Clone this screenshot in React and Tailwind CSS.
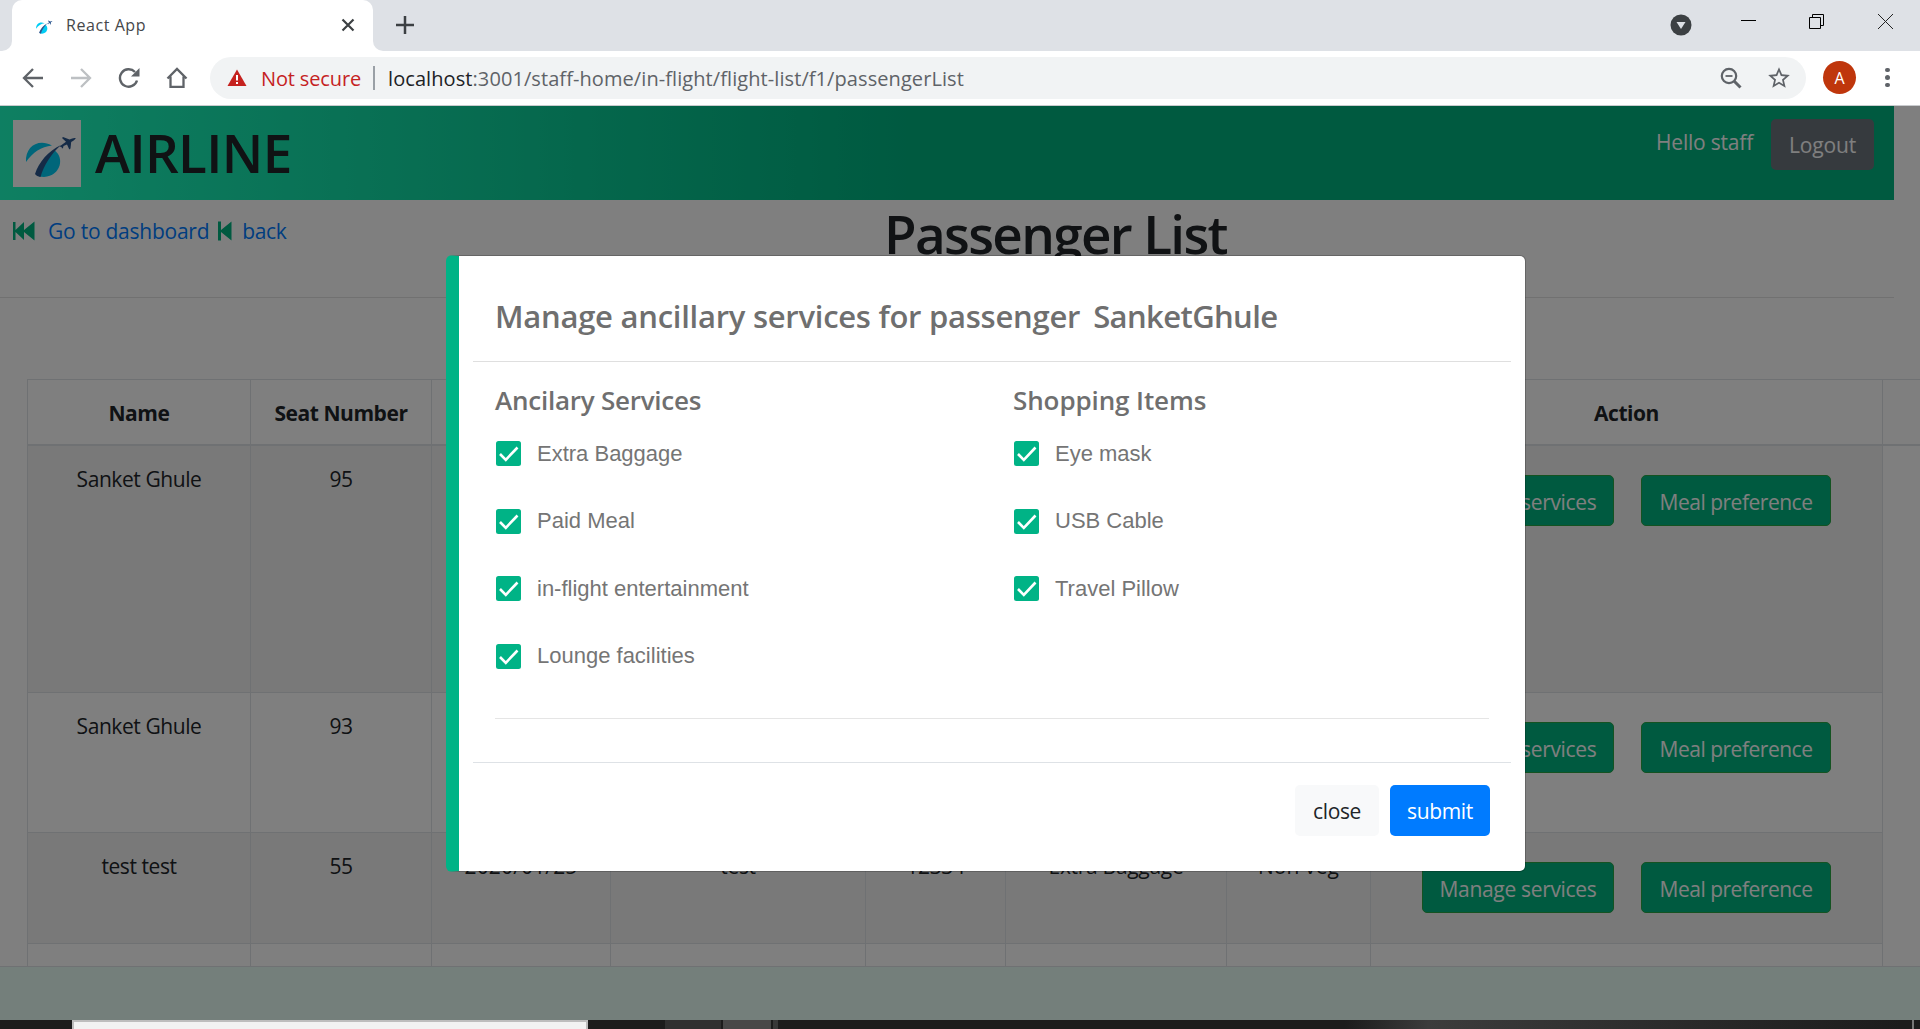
import React from "react";

function Logo({ className }) {
  return (
    <svg viewBox="0 0 68 67" className={className}>
      <path d="M13 42C12 27 25 18 39 25.500C28 27 20 32 13 42Z" fill="#00cdf5" />
      <path d="M41 30C52 37 48 56 31 57L26 56.500C29 46 34 38 41 30Z" fill="#00cdf5" />
      <path d="M22 54C26 42 35 31 48 25C38 34 31 45 27.500 57C25 56.500 23 55.500 22 54Z" fill="#2b568f" />
      <path
        d="M46.500 26.500L53 21.800L49 18L50 17L56.500 19.500C59 18.500 61 17.500 62.800 18.200C61.500 20 60 21 58.200 22L57.500 28.500L56.300 29.500L54 24.500L50.500 26L50 28L49 28.500L48.500 27Z"
        fill="#2b568f"
      />
    </svg>
  );
}

function TabStrip() {
  return (
    <div className="flex h-[51px] bg-[#dee1e6]">
      <div className="flex w-3 items-end bg-white">
        <div className="h-full w-full rounded-br-[10px] bg-[#dee1e6]" />
      </div>
      <div className="bg-[#dee1e6]">
        <div className="flex h-[51px] w-[361px] items-center rounded-t-[10px] bg-white pl-[20px]">
          <Logo className="-ml-px h-[22px] w-[24px]" />
          <span className="mb-[2px] ml-[11px] text-[16px] tracking-[0.56px] text-[#45474a]">React App</span>
          <svg viewBox="0 0 14 14" className="mr-[18px] mb-px ml-auto h-[14px] w-[14px]" stroke="#3c4043" strokeWidth="2.2">
            <path d="M1.500 1.500L12.500 12.500M12.500 1.500L1.500 12.500" />
          </svg>
        </div>
      </div>
      <div className="flex flex-1 bg-white">
        <div className="flex flex-1 items-start rounded-bl-[10px] bg-[#dee1e6]">
          <svg viewBox="0 0 18 18" className="mt-[16px] ml-[23px] h-[18px] w-[18px]" stroke="#3c4043" strokeWidth="2.5">
            <path d="M9 0V18M0 9H18" />
          </svg>
          <svg viewBox="0 0 22 22" className="mt-[14px] ml-auto h-[22px] w-[22px]">
            <circle cx="11" cy="11" r="10.500" fill="#3c4043" />
            <path d="M6.500 8H15.500L11 15Z" fill="#dee1e6" />
          </svg>
          <svg viewBox="0 0 15 15" className="mt-[14px] ml-[49px] h-[15px] w-[15px]" stroke="#000">
            <path d="M0 6.500H15" />
          </svg>
          <svg viewBox="0 0 15 15" className="mt-[14px] ml-[53px] h-[15px] w-[15px]" stroke="#000" fill="none">
            <path d="M0.500 3.500H11.500V14.500H0.500ZM3.500 3.500V0.500H14.500V11.500H11.500" />
          </svg>
          <svg viewBox="0 0 15 15" className="mt-[14px] mr-[27px] ml-[54px] h-[15px] w-[15px]" stroke="#222">
            <path d="M0 0L15 15M15 0L0 15" />
          </svg>
        </div>
      </div>
    </div>
  );
}

function Toolbar() {
  return (
    <div className="flex h-[55px] items-center border-b border-[#c9cbce] bg-white pl-[22px]">
      <svg viewBox="0 0 22 22" className="h-[22px] w-[22px]" fill="none" stroke="#5f6368" strokeWidth="2.3">
        <path d="M21 11H2M11 2L2 11L11 20" />
      </svg>
      <svg viewBox="0 0 22 22" className="ml-[26px] h-[22px] w-[22px]" fill="none" stroke="#bdc0c3" strokeWidth="2.3">
        <path d="M1 11H20M11 2L20 11L11 20" />
      </svg>
      <svg viewBox="0 0 22 22" className="ml-[26px] h-[22px] w-[22px]" fill="none" stroke="#5f6368" strokeWidth="2.4">
        <path d="M19 13.500A8.700 8.700 0 1 1 17 5" />
        <path d="M21.500 1V9.500H13Z" fill="#5f6368" stroke="none" />
      </svg>
      <svg viewBox="0 0 22 22" className="ml-[26px] h-[22px] w-[22px]" fill="none" stroke="#5f6368" strokeWidth="2.3">
        <path d="M1.500 11.500L11 2L20.500 11.500M4.500 9.500V19.800H17.500V9.500" />
      </svg>
      <div className="ml-[22px] flex h-[42px] w-[1596px] items-center rounded-full bg-[#f1f3f4] pl-[17px]">
        <svg viewBox="0 0 20 18" className="h-[18px] w-[20px]">
          <path d="M10 0.500L19.500 17H0.500Z" fill="#c5221f" />
          <path d="M10 6V11.500M10 13V15" stroke="#fff" strokeWidth="2" />
        </svg>
        <span className="mt-px ml-[14px] text-[20px] tracking-[-0.14px] text-[#c5221f]">Not secure</span>
        <span className="ml-[12px] h-6 w-[2px] bg-[#9aa0a6]" />
        <span className="mt-px ml-[13px] text-[20px] tracking-[0.08px] text-[#5f6368]">
          <span className="text-[#202124]">localhost</span>:3001/staff-home/in-flight/flight-list/f1/passengerList
        </span>
        <svg viewBox="0 0 22 22" className="mr-[24px] ml-auto h-[22px] w-[22px]" fill="none" stroke="#5f6368">
          <circle cx="9" cy="9" r="7.200" strokeWidth="2.200" />
          <path d="M14 14L20.500 20.500" strokeWidth="3" />
          <path d="M5.500 9H12.500" strokeWidth="1.800" />
        </svg>
        <svg viewBox="0 0 24 24" className="mr-[14px] h-[26px] w-[26px]" fill="#5f6368">
          <path d="M22 9.240l-7.190-.62L12 2 9.190 8.630 2 9.240l5.460 4.730L5.820 21 12 17.270 18.180 21l-1.630-7.030L22 9.240zM12 15.400l-3.760 2.270 1-4.280-3.320-2.880 4.380-.38L12 6.100l1.710 4.040 4.380.38-3.320 2.880 1 4.280L12 15.400z" />
        </svg>
      </div>
      <div className="mb-px ml-[17px] flex h-[33px] w-[33px] items-center justify-center rounded-full bg-[#bf360c] text-[16px] text-white">
        A
      </div>
      <div className="mb-px ml-[29px] flex flex-col gap-[3px]">
        <span className="h-[4.5px] w-[4.5px] rounded-full bg-[#5f6368]" />
        <span className="h-[4.5px] w-[4.5px] rounded-full bg-[#5f6368]" />
        <span className="h-[4.5px] w-[4.5px] rounded-full bg-[#5f6368]" />
      </div>
    </div>
  );
}

function AppHeader() {
  return (
    <header className="flex h-[94px] w-[1894px] items-start bg-linear-to-r from-[#1dffc4] from-0% to-[#00b481] to-48% pl-[13px]">
      <div className="mt-[14px] h-[67px] w-[68px] bg-white">
        <Logo className="h-[67px] w-[68px]" />
      </div>
      <span className="mt-[13px] ml-[14px] text-[53px] leading-[67px] font-semibold tracking-[-0.65px]">AIRLINE</span>
      <span className="mt-[20px] mr-[18px] ml-auto text-[21px] leading-8 tracking-[-0.21px] text-white">Hello staff</span>
      <button className="mt-[13px] mr-[20px] h-[51px] w-[103px] rounded-[5px] bg-[#6c757d] pt-[3px] text-[21px] tracking-[-0.17px] text-white">
        Logout
      </button>
    </header>
  );
}

function PageHeading() {
  return (
    <div className="flex h-[98px] w-[1894px] items-start border-b border-[#e3e3e3]">
      <div className="flex w-[884px] items-center pt-[15px] pl-[13px] text-[21px] leading-8 text-[#007bff]">
        <svg viewBox="0 0 22 20" className="h-[20px] w-[22px]" fill="#00b481">
          <path d="M0 1H2.500V9L11 1V9L21.500 0.500V19.500L11 11V19L2.500 11V19H0Z" />
        </svg>
        <span className="ml-[13px] tracking-[-0.24px]">Go to dashboard</span>
        <svg viewBox="0 0 14 20" className="ml-[9px] h-[20px] w-[14px]" fill="#00b481">
          <path d="M0 0.500H3V9L13.500 0.500V19.500L3 11V19.500H0Z" />
        </svg>
        <span className="ml-[10px] tracking-[-0.4px]">back</span>
      </div>
      <h1 className="pt-[2px] text-[53px] leading-[64px] font-semibold tracking-[-1.65px]">Passenger List</h1>
    </div>
  );
}

function ActionButtons() {
  return (
    <div className="flex justify-center gap-[27px] pt-[13px]">
      <button className="h-[51px] w-[192px] rounded-[5px] border border-[#28a745] bg-[#00b481] pt-[2px] tracking-[-0.32px] text-white">
        Manage services
      </button>
      <button className="h-[51px] w-[190px] rounded-[5px] border border-[#28a745] bg-[#00b481] pt-[2px] tracking-[-0.49px] text-white">
        Meal preference
      </button>
    </div>
  );
}

const COLUMNS = "grid grid-cols-[223px_181px_179px_255px_140px_221px_144px_512px_100px]";
const HEADINGS = ["Name", "Seat Number", "", "", "", "", "", "Action", ""];
const ROWS = [
  { height: "h-[247px]", striped: true, cells: ["Sanket Ghule", "95", "", "", "", "", ""] },
  { height: "h-[140px]", striped: false, cells: ["Sanket Ghule", "93", "", "", "", "", ""] },
  {
    height: "h-[111px]",
    striped: true,
    cells: ["test test", "55", "2020/01/25", "test", "12334", "Extra Baggage", "Non veg"],
  },
];
const CELL_TRACKING = [
  "tracking-[-0.43px]",
  "tracking-[-0.43px]",
  "tracking-[0.15px]",
  "tracking-[-0.3px]",
  "tracking-[-0.3px]",
  "tracking-[-0.3px]",
  "tracking-[0.1px]",
];

function PassengerTable() {
  return (
    <div className="mt-[81px] ml-[27px] w-[1955px] text-center text-[21px] leading-8">
      <div className={COLUMNS + " h-[67px] border-t border-b-2 border-t-[#dee2e6] border-b-[#dee2e6]"}>
        {HEADINGS.map((h, i) => (
          <div key={i} className="border-l border-[#dee2e6] pt-[17px] font-bold tracking-[-0.45px]">
            {h}
          </div>
        ))}
      </div>
      {ROWS.map((row, r) => (
        <div key={r} className={COLUMNS + " " + row.height}>
          {row.cells.map((c, i) => (
            <div
              key={i}
              className={
                "border-b border-l border-[#dee2e6] pt-[17px] " +
                CELL_TRACKING[i] +
                (row.striped ? " bg-[#f2f2f2]" : "")
              }
            >
              {c}
            </div>
          ))}
          <div className={"border-b border-l border-[#dee2e6] pt-4 " + (row.striped ? "bg-[#f2f2f2]" : "")}>
            <ActionButtons />
          </div>
          <div className="border-l border-[#dee2e6]" />
        </div>
      ))}
      <div className={COLUMNS + " h-[60px]"}>
        {HEADINGS.map((h, i) => (
          <div key={i} className="border-l border-[#dee2e6]" />
        ))}
      </div>
    </div>
  );
}

function CheckList({ title, titleClass, items }) {
  return (
    <div className="w-[518px] shrink-0">
      <h5 className={"text-[26px] leading-8 font-semibold " + titleClass}>{title}</h5>
      <div className="mt-[4px]">
        {items.map((item) => (
          <div key={item} className="flex h-[67.5px] items-center pl-px">
            <svg viewBox="0 0 25 25" className="h-[25px] w-[25px]">
              <rect width="25" height="25" rx="2.500" fill="#00b386" />
              <path d="M4 13L9.800 18.800L21.500 6.500" fill="none" stroke="#fff" strokeWidth="2.600" />
            </svg>
            <span className="ml-[16px] font-['Liberation_Sans',Arial,sans-serif] text-[22px] leading-6 text-[#757575]">
              {item}
            </span>
          </div>
        ))}
      </div>
    </div>
  );
}

function ServicesModal() {
  return (
    <div className="h-[617px] w-[1080px] rounded-[6px] border border-l-[13px] border-black/20 border-l-[#00b386] bg-white bg-clip-padding px-[14px] text-[#6f6f6f]">
      <div className="h-[106px] border-b border-[#dfdfdf] pt-[38px] pl-[22px] text-[31px] leading-[44px] font-semibold whitespace-pre">
        <span className="tracking-[-0.26px]">Manage ancillary services for passenger</span>
        <span className="ml-[13px] tracking-[-0.6px]">SanketGhule</span>
      </div>
      <div className="mx-[22px] flex h-[357px] border-b border-[#e5e5e5] pt-[22px]">
        <CheckList
          title="Ancilary Services"
          titleClass="tracking-[-0.24px]"
          items={["Extra Baggage", "Paid Meal", "in-flight entertainment", "Lounge facilities"]}
        />
        <CheckList
          title="Shopping Items"
          titleClass="tracking-[-0.1px]"
          items={["Eye mask", "USB Cable", "Travel Pillow"]}
        />
      </div>
      <div className="mt-[43px] flex justify-end gap-[11px] border-t border-[#dee2e6] pt-[22px] pr-[21px] text-[21px]">
        <button className="h-[51px] w-[84px] rounded-[5px] bg-[#f8f9fa] pt-[3px] tracking-[-0.4px] text-[#212529]">
          close
        </button>
        <button className="h-[51px] w-[100px] rounded-[5px] bg-[#007bff] pt-[3px] tracking-[-0.35px] text-white">
          submit
        </button>
      </div>
    </div>
  );
}

function DesktopEdge() {
  return (
    <div className="flex h-[9px] bg-[#1c1c1c]">
      <div className="ml-[72px] w-[516px] border-x-2 border-t-2 border-[#bdbdbd] bg-[#f2f2f2]" />
      <div className="ml-[77px] w-[56px] bg-[#303030]" />
      <div className="ml-[2px] w-[48px] bg-[#484848]" />
      <div className="ml-[2px] w-[5px] bg-[#383838]" />
      <div className="ml-[567px] w-[555px] bg-linear-to-r from-[#1c1c1c] via-[#3c3c3c] via-15% to-[#1c1c1c]" />
      <div className="ml-[12px] w-[2px] bg-[#777777]" />
    </div>
  );
}

export default function App() {
  return (
    <div className="h-[1029px] w-[1920px] overflow-hidden bg-white font-['Open_Sans','Noto_Sans',sans-serif] text-[#212529]">
      <TabStrip />
      <Toolbar />
      <div className="relative h-[914px] overflow-hidden">
        <div className="h-[860px] overflow-hidden">
          <AppHeader />
          <PageHeading />
          <PassengerTable />
        </div>
        <footer className="h-[54px] border-t border-[#dee2e6] bg-[#e8fff7]" />
        <div className="absolute inset-0 flex items-start bg-black/50 pt-[149px] pl-[446px]">
          <ServicesModal />
        </div>
      </div>
      <DesktopEdge />
    </div>
  );
}
